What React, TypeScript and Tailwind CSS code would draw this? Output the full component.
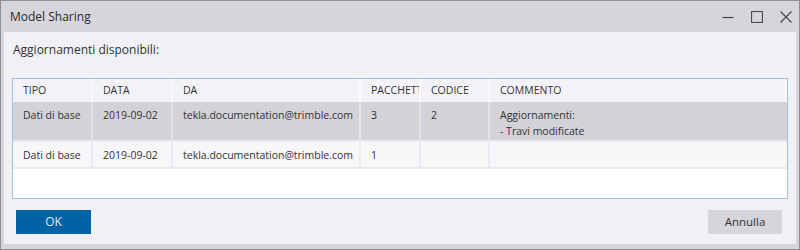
import React from "react";

type Row = {
	tipo: string;
	data: string;
	da: string;
	pacchetti: string;
	codice: string;
	commento: string[];
	selected?: boolean;
};

const rows: Row[] = [
	{
		tipo: "Dati di base",
		data: "2019-09-02",
		da: "tekla.documentation@trimble.com",
		pacchetti: "3",
		codice: "2",
		commento: ["Aggiornamenti:", "- Travi modificate"],
		selected: true,
	},
	{
		tipo: "Dati di base",
		data: "2019-09-02",
		da: "tekla.documentation@trimble.com",
		pacchetti: "1",
		codice: "",
		commento: [],
	},
];

const cols = "grid grid-cols-[80px_80px_188px_60px_69px_1fr]";

function TitleBar() {
	return (
		<div className="h-[31px] flex items-center pl-[9px] pr-[7px] text-[12px] text-[#2b2b2b]">
			<span className="flex-1">Model Sharing</span>
			<div className="flex items-center gap-[17px] text-[#4a4a4a]">
				<svg width="12" height="12" viewBox="0 0 12 12">
					<path d="M0.5 6.5h11" stroke="currentColor" strokeWidth="1.2" />
				</svg>
				<svg width="12" height="12" viewBox="0 0 12 12">
					<rect x="0.5" y="0.5" width="11" height="11" fill="none" stroke="currentColor" strokeWidth="1.2" />
				</svg>
				<svg width="12" height="12" viewBox="0 0 12 12">
					<path d="M0.5 0.5l11 11M11.5 0.5l-11 11" stroke="currentColor" strokeWidth="1.2" />
				</svg>
			</div>
		</div>
	);
}

function Table() {
	return (
		<div className="h-[121px] border border-[#a8bcd6] bg-white flex flex-col text-[10.5px] text-[#333]">
			<div className={`${cols} h-[23px] bg-[#f3f3f7] items-stretch`}>
				{["TIPO", "DATA", "DA", "PACCHETTI", "CODICE", "COMMENTO"].map((h) => (
					<div
						key={h}
						className="flex items-center pl-[10px] border-r-2 border-[#f9f9fb] overflow-hidden whitespace-nowrap"
					>
						{h}
					</div>
				))}
			</div>
			{rows.map((r, i) => (
				<div
					key={i}
					className={`${cols} border-b-2 border-[#ebebef] ${
						r.selected ? "h-[40px] bg-[#d2d2d8]" : "h-[27px] bg-[#f7f7f9]"
					}`}
				>
					{[r.tipo, r.data, r.da, r.pacchetti, r.codice].map((v, j) => (
						<div
							key={j}
							className={`pl-[10px] pt-[5px] leading-[16px] border-r-2 whitespace-nowrap overflow-hidden ${
								r.selected ? "border-[#e2e2e7]" : "border-[#ebebef]"
							}`}
						>
							{v}
						</div>
					))}
					<div className="pl-[10px] pt-[5px] leading-[16px]">
						{r.commento.map((c) => (
							<div key={c}>{c}</div>
						))}
					</div>
				</div>
			))}
		</div>
	);
}

export default function App() {
	return (
		<div
			className="w-[800px] h-[250px] bg-[#d5d5da] border border-[#8f8f94] flex flex-col"
			style={{ fontFamily: '"Open Sans", "Noto Sans", sans-serif' }}
		>
			<TitleBar />
			<div className="flex-1 mx-[3px] mb-[5px] bg-[#f0f0f5] px-[8px] flex flex-col">
				<div className="pt-[9px] pl-[1px] text-[12px] text-[#333] h-[46px]">
					Aggiornamenti disponibili:
				</div>
				<Table />
				<div className="flex justify-between items-center mt-[11px] px-[4px]">
					<button className="w-[75px] h-[24px] bg-[#0063a3] text-[#dfe9f2] text-[12px]">
						OK
					</button>
					<button className="w-[74px] h-[24px] bg-[#d5d5da] text-[#333] text-[11.5px] mr-[2px]">
						Annulla
					</button>
				</div>
			</div>
		</div>
	);
}
